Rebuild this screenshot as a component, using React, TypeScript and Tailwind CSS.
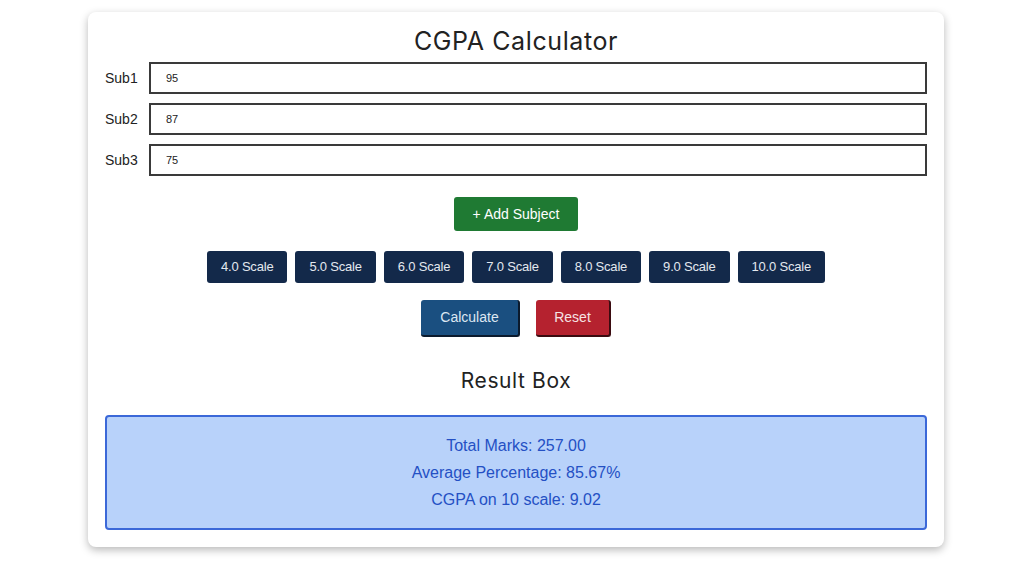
import React from "react";

const subjects = [
  { label: "Sub1", value: "95" },
  { label: "Sub2", value: "87" },
  { label: "Sub3", value: "75" },
];

const scales = ["4.0", "5.0", "6.0", "7.0", "8.0", "9.0", "10.0"];

export default function App() {
  return (
    <div className="min-h-[578px] w-[1024px] bg-white pt-3 font-['Liberation_Sans',Arial,sans-serif]">
      <div className="ml-[88px] w-[856px] rounded-lg bg-white px-[17px] pb-[17px] pt-[14px] shadow-[0_3px_8px_rgba(0,0,0,0.28)]">
        <h1 className="text-center font-['Inter',sans-serif] text-[25px] leading-[30px] tracking-[0.6px] text-[#222]">
          CGPA Calculator
        </h1>

        <div className="mt-[6px] flex flex-col gap-[9px]">
          {subjects.map((s) => (
            <div key={s.label} className="flex items-center">
              <label className="w-[44px] text-[14px] text-[#222]">{s.label}</label>
              <input
                defaultValue={s.value}
                className="h-[32px] w-[779px] border-2 border-[#3a3a3a] bg-white px-[15px] text-[11px] text-[#222] outline-none"
              />
            </div>
          ))}
        </div>

        <div className="mt-[21px] flex justify-center">
          <button className="h-[34px] w-[124px] rounded-[3px] bg-[#1f7a33] text-[14px] text-white">
            + Add Subject
          </button>
        </div>

        <div className="mt-[20px] flex justify-center gap-2">
          {scales.map((s) => (
            <button
              key={s}
              className="h-[32px] rounded-[3px] bg-[#13294a] px-[14px] text-[13px] tracking-[-0.2px] text-[#e3e8ef]"
            >
              {s} Scale
            </button>
          ))}
        </div>

        <div className="mt-[17px] flex justify-center gap-4">
          <button className="h-[37px] w-[99px] rounded-[3px] border-b-2 border-r-2 border-[#0b1a2d] bg-[#1a4f80] text-[14px] text-[#dde7f2]">
            Calculate
          </button>
          <button className="h-[37px] w-[75px] rounded-[3px] border-b-2 border-r-2 border-[#3a0b10] bg-[#b5222f] text-[14px] text-[#f6e2e4]">
            Reset
          </button>
        </div>

        <h2 className="mt-[30px] text-center font-['Inter',sans-serif] text-[21px] leading-[28px] tracking-[0.6px] text-[#222]">
          Result Box
        </h2>

        <div className="mt-[20px] flex h-[115px] flex-col items-center justify-center gap-[2px] rounded-[4px] border-2 border-[#3b68d8] bg-[#b8d2fa] text-[16px] leading-[25px] text-[#2450c4]">
          <p>Total Marks: 257.00</p>
          <p>Average Percentage: 85.67%</p>
          <p>CGPA on 10 scale: 9.02</p>
        </div>
      </div>
    </div>
  );
}
